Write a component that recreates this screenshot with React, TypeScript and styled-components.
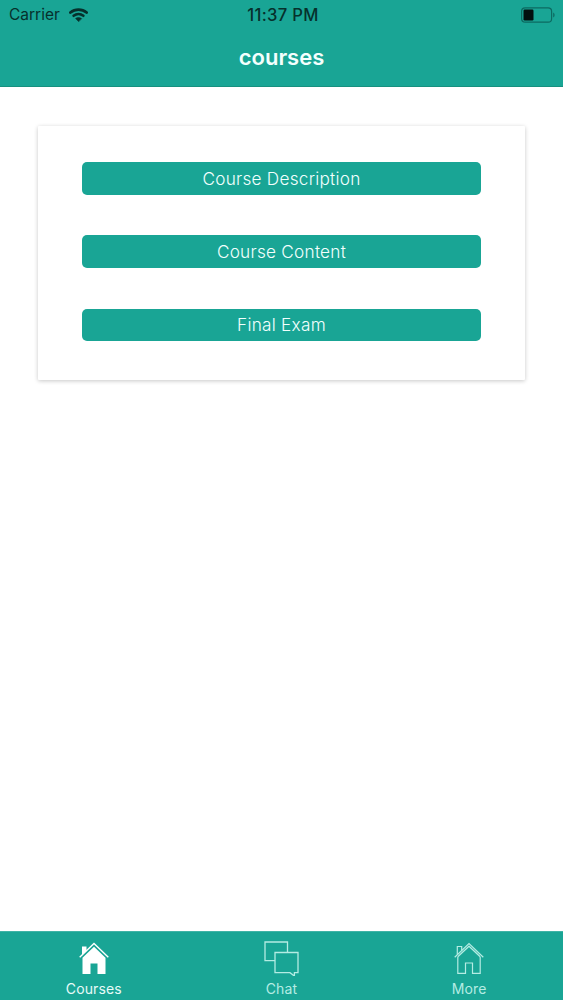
import React from "react";
import styled, { createGlobalStyle } from "styled-components";

const teal = "#19a595";

const Global = createGlobalStyle`
  html, body { margin: 0; padding: 0; background: #fff; }
  body { font-family: Inter, "Liberation Sans", sans-serif; }
`;

const Screen = styled.div`
  width: 563px;
  height: 1000px;
  display: flex;
  flex-direction: column;
  overflow: hidden;
  background: #fff;
`;

const Header = styled.header`
  height: 87px;
  flex: none;
  box-sizing: border-box;
  background: ${teal};
  border-bottom: 1px solid #17907f;
  display: flex;
  flex-direction: column;
`;

const StatusBar = styled.div`
  height: 29px;
  padding: 0 9px;
  display: grid;
  grid-template-columns: 1fr auto 1fr;
  align-items: center;
  color: #06302c;
  font-size: 15.5px;
`;

const Carrier = styled.div`
  display: flex;
  align-items: center;
  gap: 9px;
`;

const Clock = styled.div`
  font-weight: 500;
  font-size: 16.6px;
  letter-spacing: 0.3px;
  margin-left: 3px;
`;

const Battery = styled.div`
  justify-self: end;
  margin-right: -1px;
  display: flex;
  align-items: center;
`;

const NavTitle = styled.h1`
  margin: 0;
  flex: 1;
  display: flex;
  align-items: center;
  justify-content: center;
  padding-bottom: 1px;
  color: #f4fffd;
  font-size: 22px;
  font-weight: 600;
`;

const Main = styled.main`
  flex: 1;
  padding: 39px 38px 0;
`;

const Card = styled.section`
  box-sizing: border-box;
  height: 254px;
  padding: 36px 44px;
  display: flex;
  flex-direction: column;
  gap: 40.7px;
  background: #fff;
  box-shadow: 0 1px 4px rgba(0, 0, 0, 0.22);
  border-radius: 1px;
`;

const ActionButton = styled.button`
  height: 32.6px;
  flex: none;
  border: 0;
  padding: 0;
  border-radius: 5px;
  background: ${teal};
  color: #f2fffd;
  font-family: inherit;
  font-size: 17.2px;
  font-weight: 300;
  letter-spacing: 0.25px;
`;

const TabBar = styled.nav`
  height: 69px;
  flex: none;
  display: grid;
  grid-template-columns: repeat(3, 1fr);
  background: ${teal};
  border-top: 1px solid #3fb3a6;
  box-sizing: border-box;
`;

const Tab = styled.div<{ $active?: boolean }>`
  display: flex;
  flex-direction: column;
  align-items: center;
  padding-top: 8px;
  color: ${(p) => (p.$active ? "#e6fbf8" : "#b4ece3")};
  font-size: 14px;
  font-weight: 400;
  letter-spacing: 0.12px;
`;

const TabIcon = styled.div`
  height: 36px;
  display: flex;
  align-items: center;
  justify-content: center;
`;

const TabLabel = styled.span`
  margin-top: 4px;
  line-height: 17px;
`;

const Wifi = () => (
  <svg width="19" height="14" viewBox="0 0 19 14" fill="none" stroke="#06302c" strokeLinecap="round">
    <path d="M1.4 4.6C6 .6 13 .6 17.6 4.6" strokeWidth="2.7" />
    <path d="M4.6 7.8c2.9-2.3 6.9-2.3 9.8 0" strokeWidth="2.6" />
    <path d="M9.5 13.4l-2.9-3c1.7-1.1 4.1-1.1 5.8 0z" fill="#06302c" strokeWidth="0.6" />
  </svg>
);

const BatteryIcon = () => (
  <svg width="34" height="16" viewBox="0 0 34 16" fill="none">
    <rect x="0.6" y="0.8" width="30" height="14.4" rx="3.5" stroke="#0d6a61" strokeWidth="1.2" />
    <rect x="2.5" y="2.6" width="10" height="10.8" rx="1.2" fill="#020f0e" />
    <path d="M32.2 5.5c1 .4 1.4 1.4 1.4 2.5s-.4 2.1-1.4 2.5z" fill="#0d6a61" />
  </svg>
);

const SolidHome = () => (
  <svg width="30" height="32" viewBox="0 0 30 32" fill="none">
    <path d="M0.7 15.2L15 1.5l14.3 13.7" stroke="#fff" strokeWidth="1.4" />
    <path d="M3 4.5h4.5v4.5L3 13.3z" fill="#fff" />
    <path fillRule="evenodd" d="M15 4.8l11.5 11V32h-8V21.5h-7V32h-8V15.8z" fill="#fff" />
  </svg>
);

const ChatIcon = () => (
  <svg width="35" height="35" viewBox="0 0 35 35" fill="none" stroke="#b4ece3" strokeWidth="1.3">
    <path d="M11 19.6H1V1h22.5v10.5" />
    <path d="M11 11.5h23v20.2h-3.6v3.4l-4.4-3.4H11z" />
  </svg>
);

const OutlineHome = () => (
  <svg width="30" height="32" viewBox="0 0 30 32" fill="none" stroke="#b4ece3" strokeWidth="1.2">
    <path d="M0.7 15.2L15 1.5l14.3 13.7" />
    <path d="M3.3 12.6V4.5h4.4v3.9" />
    <path d="M3.8 14.8l11.2-10.6 11.2 10.6" />
    <path d="M3.8 14.8V31.4h7.7V21h7V31.4h7.7V14.8" />
  </svg>
);

export default function App() {
  return (
    <>
      <Global />
      <Screen>
        <Header>
          <StatusBar>
            <Carrier>
              Carrier
              <Wifi />
            </Carrier>
            <Clock>11:37 PM</Clock>
            <Battery>
              <BatteryIcon />
            </Battery>
          </StatusBar>
          <NavTitle>courses</NavTitle>
        </Header>
        <Main>
          <Card>
            <ActionButton>Course Description</ActionButton>
            <ActionButton>Course Content</ActionButton>
            <ActionButton>Final Exam</ActionButton>
          </Card>
        </Main>
        <TabBar>
          <Tab $active>
            <TabIcon>
              <SolidHome />
            </TabIcon>
            <TabLabel>Courses</TabLabel>
          </Tab>
          <Tab>
            <TabIcon>
              <ChatIcon />
            </TabIcon>
            <TabLabel>Chat</TabLabel>
          </Tab>
          <Tab>
            <TabIcon>
              <OutlineHome />
            </TabIcon>
            <TabLabel>More</TabLabel>
          </Tab>
        </TabBar>
      </Screen>
    </>
  );
}
